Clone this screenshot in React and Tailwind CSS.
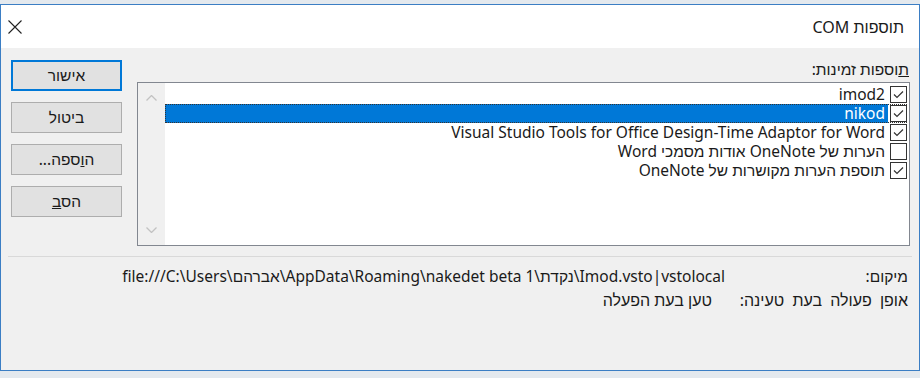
import { useState } from 'react';

const font = { fontFamily: '"Segoe UI", "Noto Sans", "Liberation Sans", "DejaVu Sans", sans-serif' };

function Check({ checked }) {
  return (
    <span className="w-[17px] h-[17px] border border-[#333333] bg-white flex items-center justify-center shrink-0">
      {checked && (
        <svg width="11" height="9" viewBox="0 0 11 9" fill="none">
          <path d="M1 4.5 L4 7.5 L10 1.5" stroke="#333333" strokeWidth="1.2" />
        </svg>
      )}
    </span>
  );
}

function Btn({ children, primary }) {
  return (
    <button
      className={`h-[31px] w-full bg-[#e1e1e1] text-[15.5px] text-[#1a1a1a] ${
        primary ? 'border-2 border-[#0078d7]' : 'border border-[#adadad]'
      }`}
    >
      {children}
    </button>
  );
}

const items = [
  { name: 'imod2', checked: true },
  { name: 'nikod', checked: true },
  { name: 'Visual Studio Tools for Office Design-Time Adaptor for Word', checked: true },
  { name: 'הערות של OneNote אודות מסמכי Word', checked: false },
  { name: 'תוספת הערות מקושרות של OneNote', checked: true },
];

export default function App() {
  const [selected, setSelected] = useState(1);

  return (
    <div className="w-[920px] h-[378px] bg-[#e4e9ee] pt-[4px]" style={font}>
      <div dir="rtl" className="h-[367px] border border-[#3b7ec4] bg-[#f0f0f0] flex flex-col">
        {/* title bar */}
        <div className="h-[43px] bg-white flex items-center justify-between pr-[15px] pl-[7px]">
          <span className="text-[16px] text-[#1a1a1a]">תוספות COM</span>
          <svg width="14" height="14" viewBox="0 0 14 14">
            <path d="M0.5 0.5 L13.5 13.5 M13.5 0.5 L0.5 13.5" stroke="#222" strokeWidth="1.1" />
          </svg>
        </div>

        <div className="flex pt-[11px] pr-[9px] pl-[10px] gap-[15px]">
          {/* available add-ins */}
          <div className="flex-1 flex flex-col">
            <div className="h-[23px] text-[15.5px] text-[#1a1a1a] leading-[20px] pr-[1px]">
              <u>ת</u>וספות זמינות:
            </div>
            <div className="h-[164px] border border-[#828790] bg-white flex">
              <div className="flex-1 pt-[2px] pr-[2px]">
                {items.map((it, i) => (
                  <div
                    key={it.name}
                    onClick={() => setSelected(i)}
                    className={`h-[19px] flex items-center gap-[2px] ${
                      selected === i ? 'outline-1 outline-dotted outline-[#333] -outline-offset-1' : ''
                    }`}
                  >
                    <Check checked={it.checked} />
                    <span
                      className={`flex-1 h-[19px] leading-[19px] text-[15.5px] pr-[3px] whitespace-nowrap ${
                        selected === i ? 'bg-[#0078d7] text-white' : 'text-[#1a1a1a]'
                      }`}
                    >
                      {it.name}
                    </span>
                  </div>
                ))}
              </div>
              <div className="w-[27px] bg-[#f0f0f0] flex flex-col items-center justify-between py-[12px]">
                <svg width="11" height="6" viewBox="0 0 11 6">
                  <path d="M0.5 5.5 L5.5 0.5 L10.5 5.5" stroke="#c2c2c2" fill="none" strokeWidth="1.3" />
                </svg>
                <svg width="11" height="6" viewBox="0 0 11 6">
                  <path d="M0.5 0.5 L5.5 5.5 L10.5 0.5" stroke="#c2c2c2" fill="none" strokeWidth="1.3" />
                </svg>
              </div>
            </div>
          </div>

          {/* buttons */}
          <div className="w-[111px] flex flex-col gap-[11px] pt-[1px]">
            <Btn primary>אישור</Btn>
            <Btn>ביטול</Btn>
            <Btn>
              ה<u>ו</u>ספה...
            </Btn>
            <Btn>
              הס<u>ב</u>
            </Btn>
          </div>
        </div>

        <div className="mx-[7px] mt-[10px] border-t border-[#d9d9d9]" />

        <div className="pr-[11px] pt-[8px] text-[15.5px] text-[#1a1a1a]">
          <div className="flex h-[23px] items-center">
            <span className="w-[183px] shrink-0 whitespace-nowrap">מיקום:</span>
            <span dir="ltr" className="whitespace-nowrap">
              file:///C:\Users\אברהם\AppData\Roaming\nakedet beta 1\נקדת\Imod.vsto|vstolocal
            </span>
          </div>
          <div className="flex h-[23px] items-center">
            <span className="w-[196px] shrink-0 whitespace-nowrap text-[16px] [word-spacing:4px]">
              אופן פעולה בעת טעינה:
            </span>
            <span className="whitespace-nowrap text-[16px]">טען בעת הפעלה</span>
          </div>
        </div>
      </div>
    </div>
  );
}
